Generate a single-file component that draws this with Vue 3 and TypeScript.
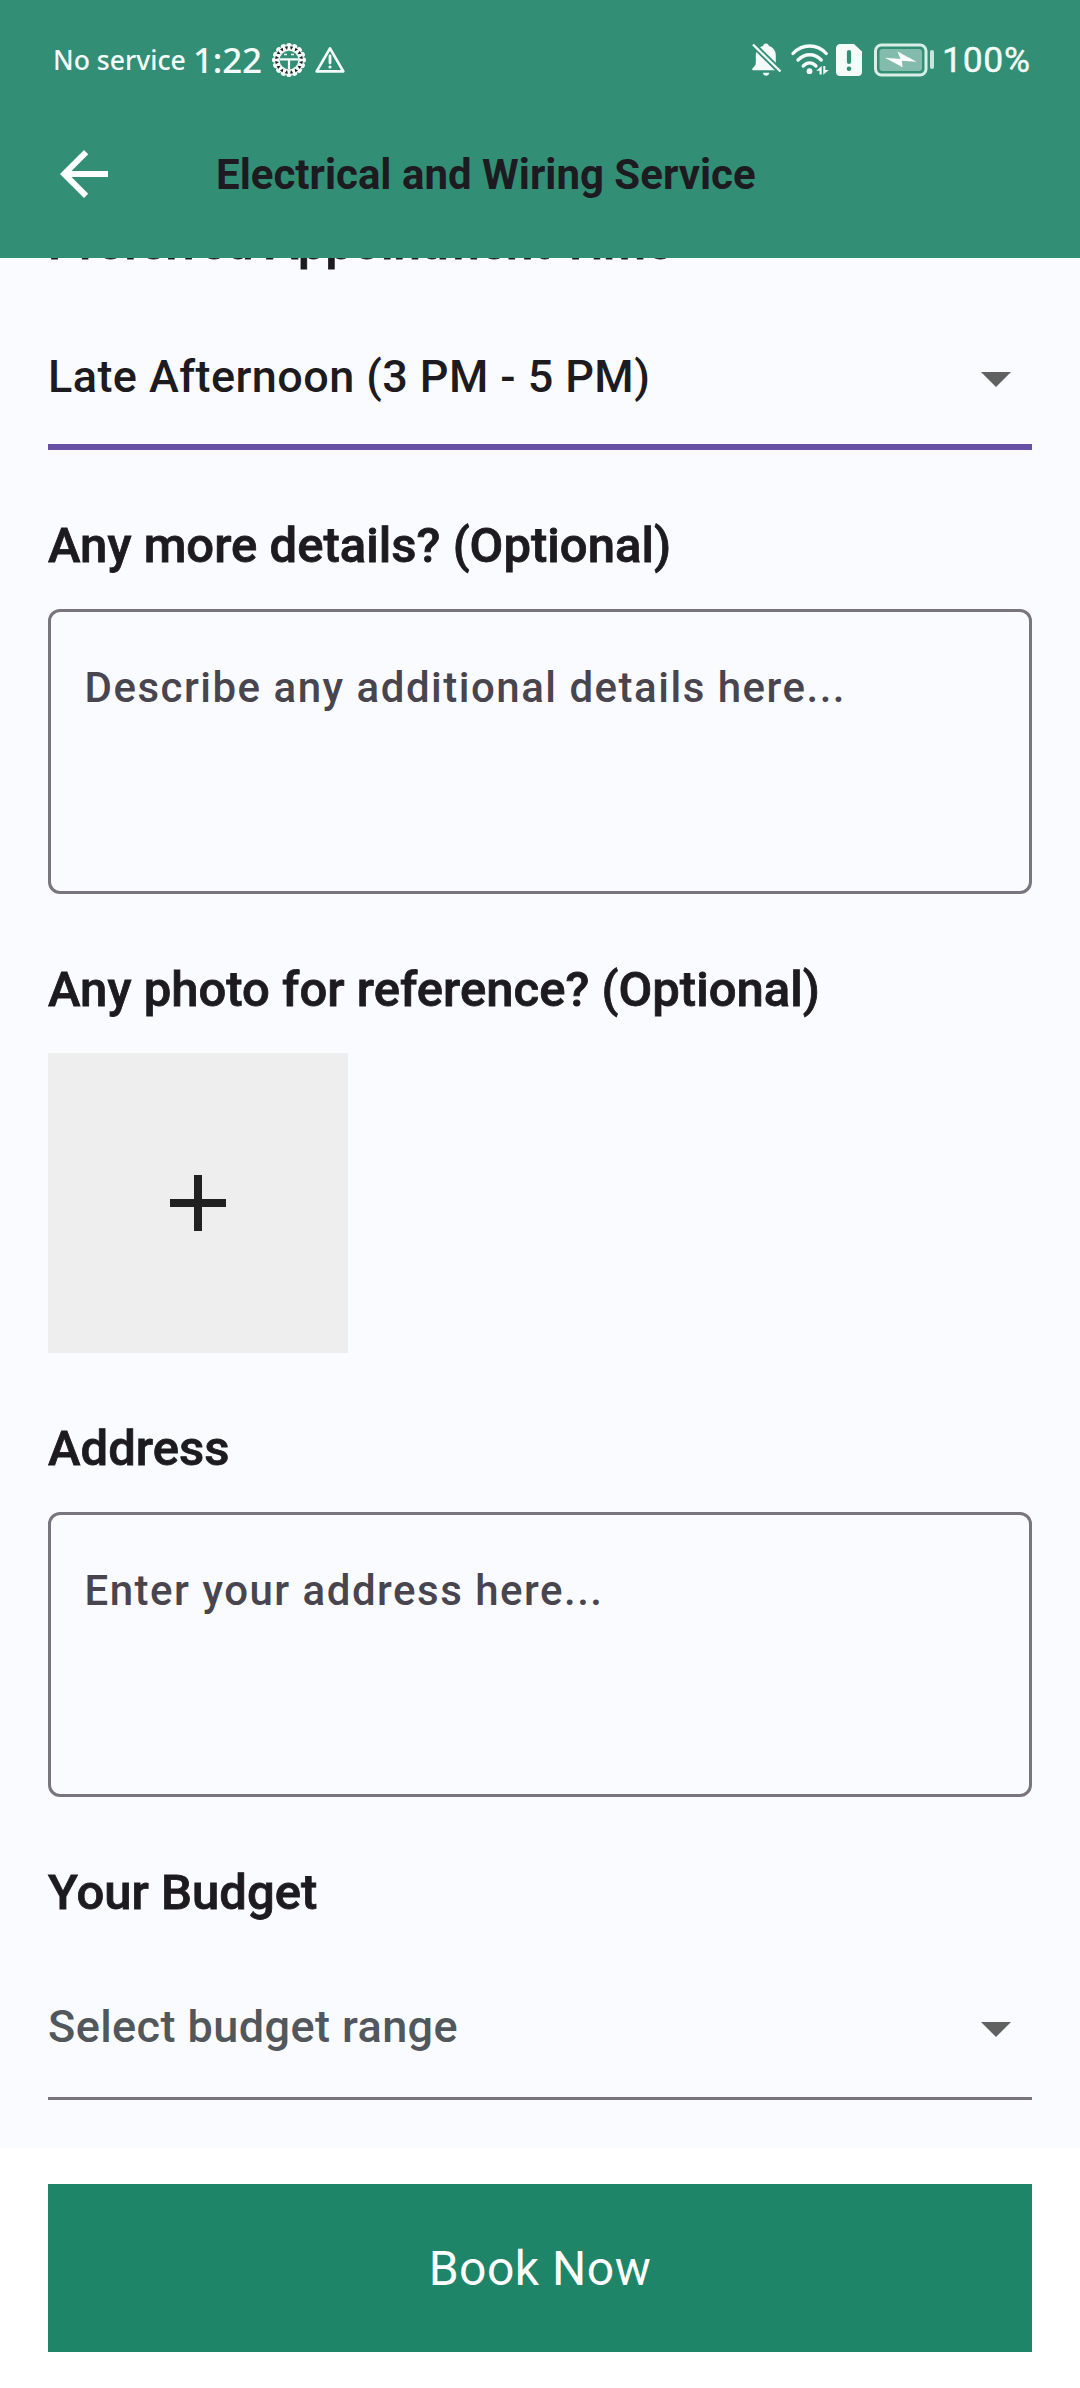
<script setup lang="ts">
import { ref } from 'vue'

interface Field {
  title: string
  kind: 'select' | 'area' | 'photo'
  text?: string
  active?: boolean
}

const fields = ref<Field[]>([
  { title: 'Preferred Appointment Time', kind: 'select', text: 'Late Afternoon (3 PM - 5 PM)', active: true },
  { title: 'Any more details? (Optional)', kind: 'area', text: 'Describe any additional details here...' },
  { title: 'Any photo for reference? (Optional)', kind: 'photo' },
  { title: 'Address', kind: 'area', text: 'Enter your address here...' },
  { title: 'Your Budget', kind: 'select', text: 'Select budget range' },
])

const teeth = Array.from({ length: 16 }, (_, i) => i * 22.5)
</script>

<template>
  <div class="screen">
    <header class="top">
      <div class="status">
        <div class="status-left">
          <span class="carrier">No service</span>
          <span class="clock">1:22</span>
          <svg class="gear" width="36" height="36" viewBox="-18 -18 36 36">
            <circle r="13" fill="#f4fbf8" />
            <circle v-for="a in teeth" :key="a" :transform="`rotate(${a})`" cx="0" cy="-14.2" r="2.8" fill="#f4fbf8" />
            <path v-for="a in teeth" :key="'n' + a" :transform="`rotate(${a + 11.25})`" d="M-1.6-13.8h3.200L0-10.200z" fill="#222" />
            <circle r="9.300" fill="#328f75" />
            <path d="M-9-.7H9M0 0V9" stroke="#f4fbf8" stroke-width="2.200" fill="none" />
            <path d="M-5-5.500h3M2-5.500h3" stroke="#f4fbf8" stroke-width="1.600" />
          </svg>
          <svg class="warn" width="32" height="30" viewBox="0 0 32 30">
            <path d="M16 3.300 29.300 26.400H2.700z" fill="none" stroke="#f4fbf8" stroke-width="2.700" stroke-linejoin="round" />
            <path d="M16 11v7" stroke="#f4fbf8" stroke-width="2.800" stroke-linecap="round" />
            <circle cx="16" cy="22" r="1.600" fill="#f4fbf8" />
          </svg>
        </div>
        <div class="status-right">
          <svg class="bell" width="30" height="34" viewBox="0 0 30 34">
            <path d="M14 0.600c1.700 0 2.700 1 2.900 2.400 4.300 1.200 6.900 4.800 6.900 9.300v7.200c0 2.600 1.200 4 3 5.700.6.600.3 2-.8 2H1.200c-1.100 0-1.400-1.300-.6-2 2.200-1.900 3.200-3.200 3.200-5.700v-7.200c0-4.500 2.800-8.100 7.300-9.300C11.300 1.600 12.300.6 14 .6z" fill="#f4fbf8" />
            <path d="M10.800 29.700h6.600c-.5 2-1.600 3-3.300 3s-2.800-1-3.300-3z" fill="#f4fbf8" />
            <path d="M0 .5 30 30" stroke="#328f75" stroke-width="6" />
            <path d="M1 1.500 28.500 28.500" stroke="#f4fbf8" stroke-width="2.300" />
          </svg>
          <svg class="wifi" width="38" height="34" viewBox="0 0 38 34">
            <g fill="none" stroke="#f4fbf8" stroke-width="3.300" stroke-linecap="round">
              <path d="M2 10.500c9.200-10 24.200-10 33.200 0" />
              <path d="M7 17c6.800-7 16.600-7 23.300 0" />
              <path d="M12.200 23c4-4 8.800-4 12.800 0" />
            </g>
            <circle cx="18.500" cy="28.200" r="2.900" fill="#f4fbf8" />
            <path d="M30.700 23v8.500h-2.200v-3.800h-3.300zM32.300 31.800v-8.800h2v4h3.500z" fill="#f4fbf8" />
          </svg>
          <svg class="sim" width="26" height="32" viewBox="0 0 26 32">
            <path d="M5 0h13l8 7.500V28c0 2.500-1.500 4-4 4H4c-2.500 0-4-1.500-4-4V4.800C0 2 1.500 0 5 0z" fill="#f4fbf8" />
            <path d="M13 8v10" stroke="#328f75" stroke-width="4.200" stroke-linecap="round" />
            <circle cx="13" cy="24.700" r="2.300" fill="#328f75" />
          </svg>
          <svg class="battery" width="62" height="34" viewBox="0 0 62 34">
            <rect x="1.500" y="2" width="50.500" height="30" rx="6" fill="none" stroke="#d8efe7" stroke-width="3" />
            <rect x="5.500" y="6" width="42.500" height="22" rx="3" fill="#84bcab" />
            <path d="M11 14.800 26.500 16 23.500 8.500 42.500 18.700 27.800 17.800 28.500 24.200z" fill="#fff" />
            <path d="M58 9v15" stroke="#c9e4db" stroke-width="4" stroke-linecap="round" />
          </svg>
          <span class="percent">100%</span>
        </div>
      </div>
      <div class="bar">
        <svg width="72" height="72" viewBox="0 0 24 24">
          <path d="M20 11H7.830l5.590-5.590L12 4l-8 8 8 8 1.410-1.410L7.830 13H20z" fill="#fff" />
        </svg>
        <h1>Electrical and Wiring Service</h1>
      </div>
    </header>

    <main class="body">
      <section v-for="f in fields" :key="f.title" class="group">
        <h2>{{ f.title }}</h2>
        <div v-if="f.kind === 'select'" class="select" :class="{ active: f.active }">
          <span>{{ f.text }}</span>
          <svg width="72" height="72" viewBox="0 0 24 24"><path d="M7 10l5 5 5-5z" fill="#616161" /></svg>
        </div>
        <div v-else-if="f.kind === 'area'" class="area">{{ f.text }}</div>
        <div v-else class="photo">
          <svg width="96" height="96" viewBox="0 0 24 24"><path d="M19 13h-6v6h-2v-6H5v-2h6V5h2v6h6z" fill="#212121" /></svg>
        </div>
      </section>
    </main>

    <footer class="foot">
      <button type="button">Book Now</button>
    </footer>
  </div>
</template>

<style>
body {
  margin: 0;
}
</style>

<style scoped>
.screen {
  width: 1080px;
  height: 2388px;
  display: flex;
  flex-direction: column;
  overflow: hidden;
  background: #f9fbff;
  color: #1d1b20;
  font-family: Roboto, "Liberation Sans", sans-serif;
}
.top {
  flex: none;
  height: 258px;
  box-sizing: border-box;
  padding-top: 30px;
  background: #328f75;
}
.status {
  height: 60px;
  display: flex;
  justify-content: space-between;
  padding: 0 48px 0 53px;
  color: #f4fbf8;
}
.status-left,
.status-right {
  display: flex;
  align-items: center;
  white-space: nowrap;
}
.carrier {
  width: 140px;
  font: 500 26.6px/60px "Noto Sans", sans-serif;
}
.clock {
  width: 78px;
  font: 500 35px/60px "Noto Sans", sans-serif;
  letter-spacing: -0.2px;
}
.warn {
  margin-left: 7px;
}
.wifi {
  margin-left: 9px;
}
.sim {
  margin-left: 7px;
}
.battery {
  margin-left: 12px;
}
.percent {
  margin-left: 6px;
  width: 90px;
  font: 400 35.5px/62px Roboto, sans-serif;
  letter-spacing: 0.7px;
  -webkit-text-stroke: 0.4px #f4fbf8;
}
.bar {
  margin-top: 48px;
  height: 72px;
  display: flex;
  align-items: center;
  padding-left: 48px;
  gap: 96px;
}
h1 {
  margin: 0;
  padding-top: 2px;
  font-size: 42px;
  line-height: 60px;
  font-weight: 700;
  white-space: nowrap;
}
.body {
  flex: none;
  height: 1890px;
  overflow: hidden;
  padding: 0 48px;
}
.group:first-child {
  margin-top: -111px;
}
h2 {
  margin: 0;
  padding: 66px 0 33px;
  font-size: 49px;
  line-height: 60px;
  font-weight: 500;
  letter-spacing: 0.03px;
  -webkit-text-stroke: 0.8px #1d1b20;
  white-space: nowrap;
}
.select {
  height: 144px;
  box-sizing: border-box;
  display: flex;
  align-items: flex-start;
  justify-content: space-between;
  padding-top: 36px;
  border-bottom: 3px solid #79747e;
  font-size: 45px;
  line-height: 70px;
  font-weight: 500;
  letter-spacing: 0.42px;
  color: #51575a;
}
.select.active {
  border-bottom: 6px solid #6750a4;
  color: #1d1b20;
}
.area {
  height: 285px;
  box-sizing: border-box;
  border: 3px solid #79747e;
  border-radius: 12px;
  padding: 46px 33.5px;
  font-size: 42px;
  line-height: 60px;
  font-weight: 500;
  letter-spacing: 1.5px;
  color: #49454f;
}
.photo {
  width: 300px;
  height: 300px;
  display: flex;
  align-items: center;
  justify-content: center;
  background: #eee;
}
.foot {
  flex: 1;
  background: #fff;
  padding: 36px 48px;
  box-sizing: border-box;
}
button {
  display: block;
  width: 984px;
  height: 168px;
  border: 0;
  padding: 2px 0 0;
  background: #1f8568;
  color: #fff;
  font: 400 48px/166px Roboto, sans-serif;
  letter-spacing: 0.5px;
}
</style>
